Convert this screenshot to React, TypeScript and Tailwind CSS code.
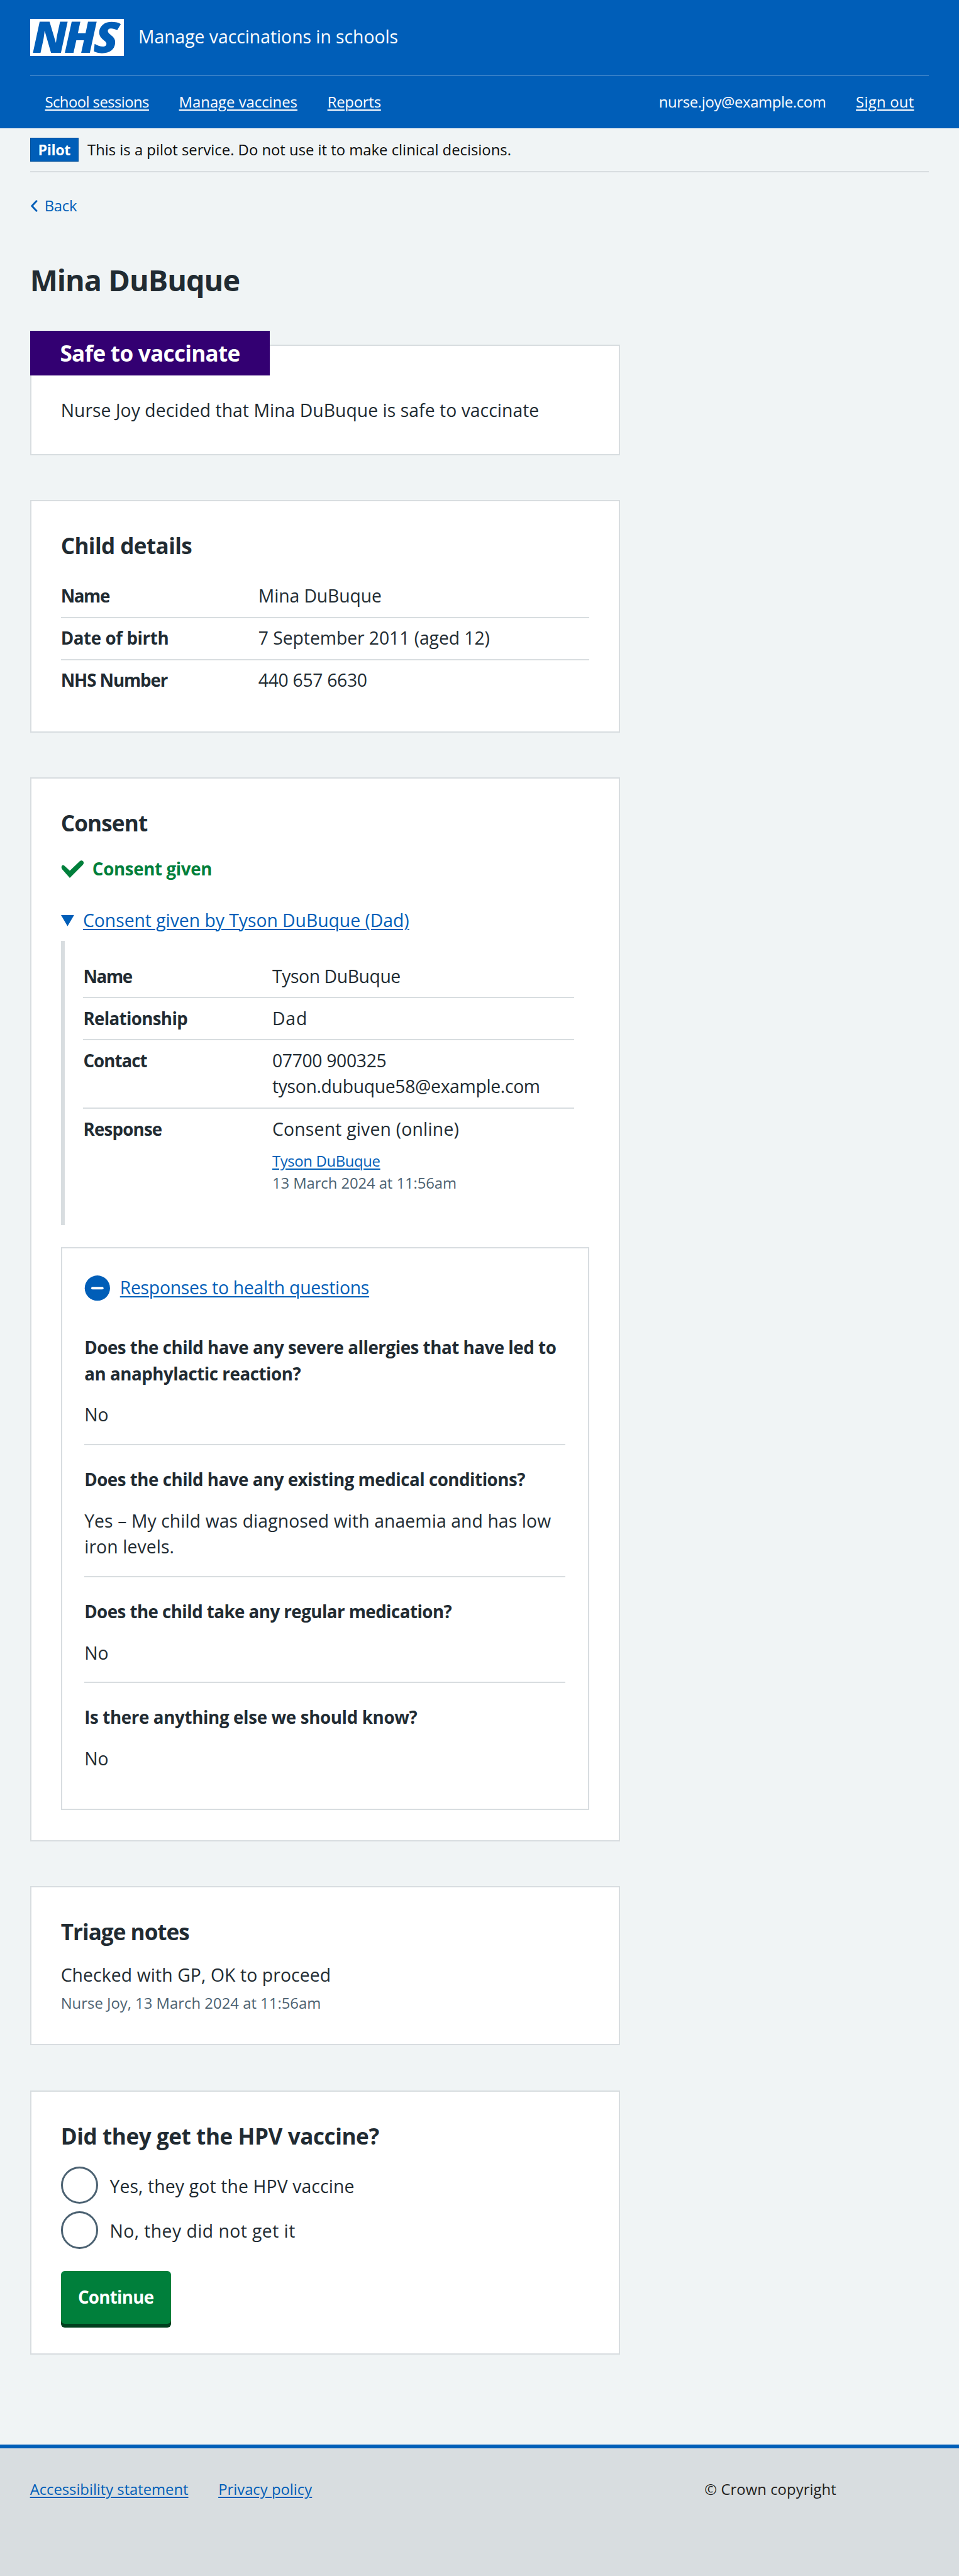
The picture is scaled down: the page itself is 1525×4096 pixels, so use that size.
import type { ReactNode } from "react";

const BODY = "text-[28.3px] leading-[41.7px]";
const BOLD = "text-[27.7px] leading-[41.7px] font-bold";
const SMALL = "text-[23.83px] leading-[35.74px]";
const LINK = "text-[#005eb8] underline decoration-[1.5px] underline-offset-[3px]";

function NhsLogo() {
  return (
    <svg
      viewBox="0 0 200 80"
      className="h-[59.57px] w-[148.93px] shrink-0 overflow-visible bg-white"
      aria-label="NHS"
    >
      <g
        fill="#005eb8"
        fontFamily="'Open Sans', sans-serif"
        fontWeight="800"
        fontStyle="italic"
        fontSize="91.6"
      >
        <text x="4.2" y="72.7" textLength="75.2" lengthAdjust="spacingAndGlyphs">N</text>
        <text x="72.6" y="72.7" textLength="69" lengthAdjust="spacingAndGlyphs">H</text>
        <text
          x="0"
          y="0"
          transform="translate(133.5 72.7) skewX(-6)"
          textLength="52.5"
          lengthAdjust="spacingAndGlyphs"
        >
          S
        </text>
      </g>
    </svg>
  );
}

function HeaderLink({ children, className }: { children: ReactNode; className?: string }) {
  return (
    <a className={`underline decoration-[1.5px] underline-offset-[3px] ${className ?? ""}`}>{children}</a>
  );
}

function Header() {
  return (
    <header className="h-[204px] bg-[#005eb8] px-[47.66px] text-white">
      <div className="flex h-[119px] items-center gap-[23.5px]">
        <NhsLogo />
        <span className={`${BODY} pb-[1px] tracking-[-0.0005em]`}>Manage vaccinations in schools</span>
      </div>
      <nav className={`${SMALL} flex h-[85px] items-center border-t-2 border-white/20 px-[23.83px]`}>
        <HeaderLink className="tracking-[-0.0232em]">School sessions</HeaderLink>
        <HeaderLink className="ml-[47.66px]">Manage vaccines</HeaderLink>
        <HeaderLink className="ml-[47.66px] tracking-[-0.0085em]">Reports</HeaderLink>
        <span className="ml-auto tracking-[-0.0143em]">nurse.joy@example.com</span>
        <HeaderLink className="ml-[47.66px] tracking-[0.0112em]">Sign out</HeaderLink>
      </nav>
    </header>
  );
}

function PilotBanner() {
  return (
    <div
      className={`${SMALL} flex h-[70px] items-center gap-[14px] border-b-2 border-[#d8dde0] text-[#0b0c0c]`}
    >
      <strong className="flex h-[38.72px] w-[77.4px] items-center justify-center border-[1.5px] border-[#004f9c] bg-[#005eb8] pt-px text-[23.4px] font-bold tracking-[-0.018em] text-white">
        Pilot
      </strong>
      <span className="pt-px">This is a pilot service. Do not use it to make clinical decisions.</span>
    </div>
  );
}

function Card({ children, className }: { children: ReactNode; className?: string }) {
  return (
    <section
      className={`w-[938px] border-2 border-[#d8dde0] bg-white px-[47px] text-[#212b32] ${className ?? ""}`}
    >
      {children}
    </section>
  );
}

function CardHeading({ children, className }: { children: ReactNode; className?: string }) {
  return (
    <h2 className={`pt-[47px] text-[35.1px] leading-[47.66px] font-bold ${className ?? ""}`}>{children}</h2>
  );
}

function Row({
  label,
  labelClass,
  last,
  tall,
  wide,
  children,
}: {
  label: string;
  labelClass: string;
  last?: boolean;
  tall?: boolean;
  wide?: boolean;
  children: ReactNode;
}) {
  return (
    <div
      className={`flex border-b-2 pt-[11.5px] ${tall ? "h-[108.72px]" : "h-[67.02px]"} ${
        last ? "border-transparent" : "border-[#d8dde0]"
      }`}
    >
      <dt className={`${BOLD} shrink-0 ${wide ? "w-[314.2px]" : "w-[300.5px]"} ${labelClass}`}>{label}</dt>
      <dd className={BODY}>{children}</dd>
    </div>
  );
}

function Question({
  question,
  trackingClass,
  last,
  children,
}: {
  question: string;
  trackingClass: string;
  last?: boolean;
  children: ReactNode;
}) {
  return (
    <div className={`pt-[34.25px] first:pt-0 ${last ? "" : "border-b-2 border-[#d8dde0] pb-[24.8px]"}`}>
      <h3 className={`${BOLD} ${trackingClass}`}>{question}</h3>
      <p className={`${BODY} mt-[23.83px]`}>{children}</p>
    </div>
  );
}

function Radio({ label, className }: { label: string; className: string }) {
  return (
    <label className="flex h-[59.57px] items-center gap-[18.2px]">
      <span className="h-[59.57px] w-[59.57px] rounded-full border-[3px] border-[#4c6272] bg-white" />
      <span className={`${BODY} pt-[5px] ${className}`}>{label}</span>
    </label>
  );
}

export default function App() {
  return (
    <div className="flex h-[4096px] w-[1525px] flex-col overflow-hidden bg-[#f0f4f5] font-['Open_Sans','Noto_Sans',sans-serif]">
      <Header />
      <main className="flex-1 px-[47.66px]">
        <PilotBanner />

        <a className={`${SMALL} mt-[35.7px] flex items-center text-[#005eb8]`}>
          <svg
            viewBox="0 0 16 26"
            className="h-[19px] w-[12px]"
            fill="none"
            stroke="#005eb8"
            strokeWidth="4"
            strokeLinecap="round"
            strokeLinejoin="round"
          >
            <path d="M13.5 2.5 L3.5 13 L13.5 23.5" />
          </svg>
          <span className="ml-[11px] tracking-[-0.01em]">Back</span>
        </a>

        <h1 className="mt-[71px] text-[46.8px] leading-[59.57px] font-bold tracking-[-0.021em] text-[#212b32]">
          Mina DuBuque
        </h1>

        <Card className="mt-[72px] h-[175.73px]">
          <h2 className="relative -mt-[24.3px] -ml-[49px] flex h-[71.48px] w-[381.25px] items-center bg-[#330072] pb-px pl-[47.8px] text-[35.1px] font-bold tracking-[-0.02em] text-white">
            Safe to vaccinate
          </h2>
          <p className={`${BODY} mt-[35.3px] tracking-[0.002em]`}>
            Nurse Joy decided that Mina DuBuque is safe to vaccinate
          </p>
        </Card>

        <Card className="mt-[71.48px] h-[369.34px]">
          <CardHeading className="tracking-[-0.017em]">Child details</CardHeading>
          <dl className="pt-[24.1px]">
            <Row label="Name" labelClass="tracking-[-0.05em]" wide>
              <span className="tracking-[-0.0034em]">Mina DuBuque</span>
            </Row>
            <Row label="Date of birth" labelClass="tracking-[-0.014em]" wide>
              <span className="tracking-[-0.0017em]">7 September 2011 (aged 12)</span>
            </Row>
            <Row label="NHS Number" labelClass="tracking-[-0.039em]" wide last>
              <span className="tracking-[-0.0107em]">440 657 6630</span>
            </Row>
          </dl>
        </Card>

        <Card className="mt-[71.48px] h-[1691.8px]">
          <CardHeading className="tracking-[-0.024em]">Consent</CardHeading>
          <p className={`${BOLD} mt-[28.4px] flex items-center tracking-[-0.013em] text-[#007f3b]`}>
            <svg viewBox="0 0 50 38" className="h-[28.3px] w-[37.2px]" fill="#007f3b">
              <path d="M1.6 12.2 C2.6 10.6 4.6 9.8 6.8 11.2 L18.8 22.2 L40.2 1.6 C42.6 -0.6 46.4 0.2 47.8 2.8 C49 5.4 48.6 7.8 46.6 9.8 L18.8 37.6 L2.8 19.6 C0.8 17.2 0.4 14.4 1.6 12.2 Z" />
            </svg>
            <span className="ml-[13px]">Consent given</span>
          </p>
          <div className={`${BODY} mt-[40px] flex items-center`}>
            <svg viewBox="0 0 28 24" className="h-[17.87px] w-[20.85px]" fill="#005eb8">
              <path d="M0 0 H28 L14 24 Z" />
            </svg>
            <a className={`${LINK} ml-[14.5px] tracking-[-0.0005em]`}>
              Consent given by Tyson DuBuque (Dad)
            </a>
          </div>

          <dl className="mt-[12px] h-[451.25px] border-l-[6px] border-[#d8dde0] pt-[23.83px] pr-[23.83px] pl-[29.8px]">
            <Row label="Name" labelClass="tracking-[-0.05em]">
              <span className="tracking-[-0.014em]">Tyson DuBuque</span>
            </Row>
            <Row label="Relationship" labelClass="tracking-[-0.024em]">
              <span className="tracking-[0.03em]">Dad</span>
            </Row>
            <Row label="Contact" labelClass="tracking-[-0.036em]" tall>
              <span className="tracking-[-0.0116em]">07700 900325</span>
              <br />
              <span className="tracking-[-0.0112em]">tyson.dubuque58@example.com</span>
            </Row>
            <Row label="Response" labelClass="tracking-[-0.029em]" last>
              <span className="tracking-[0.008em]">Consent given (online)</span>
              <div className={`${SMALL} mt-[12.4px]`}>
                <a className={`${LINK} tracking-[-0.0141em]`}>Tyson DuBuque</a>
                <p className="tracking-[-0.003em] text-[#4c6272]">13 March 2024 at 11:56am</p>
              </div>
            </Row>
          </dl>

          <div className="mt-[35.74px] h-[895.05px] border-2 border-[#d8dde0] px-[35.5px] pt-[41.5px]">
            <div className={`${BODY} mb-[53.4px] flex items-center`}>
              <svg viewBox="0 0 56 56" className="h-[41.7px] w-[41.7px]">
                <circle cx="28" cy="28.5" r="27" fill="#005eb8" />
                <path d="M17.5 28.5 H38.5" stroke="#fff" strokeWidth="5.5" strokeLinecap="round" />
              </svg>
              <a className={`${LINK} ml-[14.9px] tracking-[-0.0084em]`}>Responses to health questions</a>
            </div>
            <div>
              <Question
                question="Does the child have any severe allergies that have led to an anaphylactic reaction?"
                trackingClass="tracking-[-0.0165em]"
              >
                No
              </Question>
              <Question
                question="Does the child have any existing medical conditions?"
                trackingClass="tracking-[-0.017em]"
              >
                <span className="tracking-[0.004em]">
                  Yes – My child was diagnosed with anaemia and has low iron levels.
                </span>
              </Question>
              <Question
                question="Does the child take any regular medication?"
                trackingClass="tracking-[-0.0195em]"
              >
                No
              </Question>
              <Question
                question="Is there anything else we should know?"
                trackingClass="tracking-[-0.0125em]"
                last
              >
                No
              </Question>
            </div>
          </div>
        </Card>

        <Card className="mt-[71.48px] h-[253.17px]">
          <CardHeading className="tracking-[-0.028em]">Triage notes</CardHeading>
          <p className={`${BODY} mt-[24px] tracking-[0.0044em]`}>Checked with GP, OK to proceed</p>
          <p className={`${SMALL} mt-[6.4px] tracking-[0.0008em] text-[#4c6272]`}>
            Nurse Joy, 13 March 2024 at 11:56am
          </p>
        </Card>

        <Card className="mt-[71.48px] h-[419.97px]">
          <CardHeading className="tracking-[-0.012em]">Did they get the HPV vaccine?</CardHeading>
          <div className="mt-[24.1px] flex flex-col gap-[11.9px]">
            <Radio label="Yes, they got the HPV vaccine" className="tracking-[0.0055em]" />
            <Radio label="No, they did not get it" className="tracking-[0.0163em]" />
          </div>
          <button
            className={`${BOLD} mt-[35.74px] flex h-[83.4px] w-[175px] items-center justify-center rounded-[6px] bg-[#007f3b] pb-[1px] tracking-[-0.026em] text-white shadow-[0_6px_0_0_#00401e]`}
          >
            Continue
          </button>
        </Card>
      </main>

      <footer
        className={`${SMALL} flex h-[209px] border-t-[6px] border-[#005eb8] bg-[#d8dde0] px-[47.66px] pt-[47.6px]`}
      >
        <a className={`${LINK} h-[36px] tracking-[-0.0017em]`}>Accessibility statement</a>
        <a className={`${LINK} ml-[47.66px] h-[36px]`}>Privacy policy</a>
        <p className="ml-auto w-[357px] tracking-[0.0023em] text-[#231f20]">© Crown copyright</p>
      </footer>
    </div>
  );
}
